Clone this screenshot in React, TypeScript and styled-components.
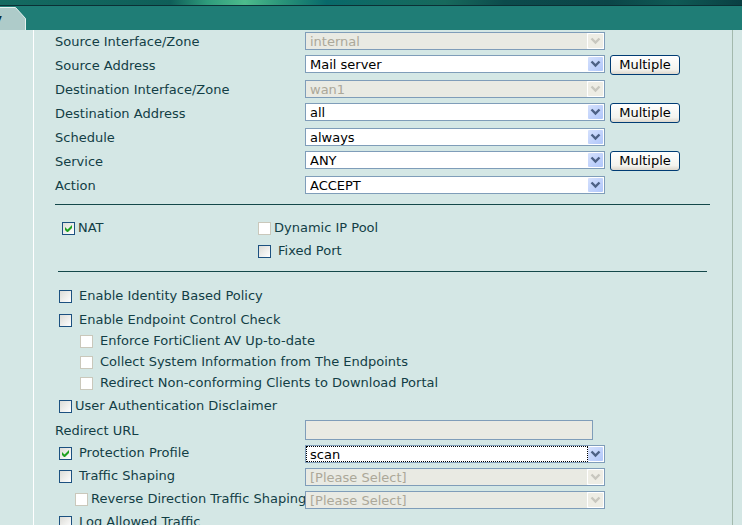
import React from "react";
import styled, { createGlobalStyle, css } from "styled-components";

const GlobalStyle = createGlobalStyle`
  * { box-sizing: border-box; }
  body {
    margin: 0;
    background: #d4e7e5;
    color: #123e45;
    font: 13px/18px Verdana, "DejaVu Sans", sans-serif;
  }
`;

const Page = styled.div`
  display: flex;
  flex-direction: column;
  height: 100vh;
  overflow: hidden;
`;

const Banner = styled.div`
  flex: none;
  height: 6px;
  border-bottom: 1px solid #0b3035;
  background: linear-gradient(
    90deg,
    #146a61 0%,
    #11655d 12%,
    #0f5f59 23%,
    #2f9c7c 28%,
    #4dbb8c 33%,
    #2a9479 38%,
    #08696a 44%,
    #116a62 52%,
    #17695c 60%,
    #0c4b4c 68%,
    #0b4548 82%,
    #0f5a55 91%,
    #0a3f43 100%
  );
`;

const TabBar = styled.nav`
  flex: none;
  display: flex;
  align-items: flex-end;
  height: 24px;
  background: #1f7d76;
`;

const Tab = styled.a`
  position: relative;
  display: flex;
  justify-content: flex-end;
  width: 26px;
  height: 23px;
  padding-right: 24px;
  overflow: hidden;
  color: #082a33;
  font-size: 11px;
  font-weight: bold;
  line-height: 24px;
  text-decoration: none;

  span { position: relative; }
`;

const TabShape = styled.svg`
  position: absolute;
  top: 0;
  left: 0;
`;

const Panel = styled.main`
  flex: 1 0 auto;
  margin: 0 9px 0 33px;
  padding: 0 22px 0 21px;
  border-left: 1px solid #fff;
  border-right: 1px solid #a3b9ad;
`;

const Row = styled.div<{ $top?: number; $height?: number }>`
  display: grid;
  grid-template-columns: 250px minmax(0, 300px) auto;
  align-items: start;
  height: ${(p) => p.$height ?? 24}px;
  padding-top: ${(p) => p.$top ?? 2}px;
`;

const FieldLabel = styled.label<{ $drop?: number }>`
  padding-top: ${(p) => p.$drop ?? 0}px;
  white-space: nowrap;
`;

const SelectFrame = styled.div<{ $focused?: boolean }>`
  position: relative;
  height: 18px;

  ${(p) =>
    p.$focused &&
    css`
      &::after {
        content: "";
        position: absolute;
        inset: 1px 17px 1px 1px;
        border: 1px dotted #000;
        pointer-events: none;
      }
    `}
`;

const SelectBox = styled.select`
  appearance: none;
  display: block;
  width: 100%;
  height: 18px;
  padding: 1px 20px 0 4px;
  border: 1px solid #7f9db9;
  border-radius: 0;
  outline: none;
  background: #fff;
  color: #000;
  font: inherit;
  line-height: 15px;

  &:disabled {
    background: #e9eae3;
    color: #aca899;
    opacity: 1;
  }
`;

const ArrowIcon = styled.svg`
  position: absolute;
  top: 1px;
  right: 1px;
  pointer-events: none;
`;

const MultipleButton = styled.button`
  justify-self: start;
  width: 70px;
  height: 20px;
  margin-left: 5px;
  padding: 0;
  border: 1px solid #003c74;
  border-radius: 3px;
  background: linear-gradient(#fff, #f3f3ee 75%, #dcd7cd);
  color: #000;
  font: inherit;
  line-height: 18px;
`;

const Rule = styled.hr<{ $inset?: number }>`
  height: 1px;
  margin: 0 ${(p) => p.$inset ?? 0}px;
  border: 0;
  background: #14484a;
`;

const NatSection = styled.section`
  display: grid;
  grid-template-columns: 196px 1fr;
  grid-auto-rows: 23px;
  padding: 14px 0 6px 7px;
`;

const Options = styled.section`
  padding-top: 15px;
`;

const CheckLine = styled.label<{ $indent?: number; $gap?: number; $height?: number }>`
  display: flex;
  align-items: flex-start;
  gap: ${(p) => p.$gap ?? 7}px;
  height: ${(p) => p.$height ?? 23}px;
  padding-left: ${(p) => p.$indent ?? 0}px;
  white-space: nowrap;
`;

const CheckBox = styled.input`
  appearance: none;
  flex: none;
  width: 13px;
  height: 13px;
  margin: 3px 0 0;
  border: 1px solid #1c5180;
  background: linear-gradient(135deg, #dcdcd7, #fff);

  &:disabled {
    border-color: #cac8bb;
    background: #fff;
  }
`;

const TickFrame = styled.span`
  position: relative;
  flex: none;
  height: 16px;

  input { display: block; }

  svg {
    position: absolute;
    left: 0;
    bottom: 0;
    display: none;
    pointer-events: none;
  }

  input:checked + svg { display: block; }
`;

const UrlInput = styled.input`
  width: 100%;
  max-width: 288px;
  height: 20px;
  padding: 0 4px;
  border: 1px solid #7f9db9;
  border-radius: 0;
  background: #e9eae3;
  font: inherit;
`;

const OptionRow = styled(Row)`
  height: 23px;
  padding-top: 0;

  ${SelectFrame} { margin-top: 1px; }
`;

function Arrow({ disabled }: { disabled?: boolean }) {
  return (
    <ArrowIcon width="17" height="16" viewBox="0 0 17 16" aria-hidden="true">
      <defs>
        <linearGradient id="arrow-face" x1="0" y1="0" x2="1" y2="1">
          <stop offset="0" stopColor="#d5e1fd" />
          <stop offset="1" stopColor="#b0c6fa" />
        </linearGradient>
      </defs>
      <rect width="17" height="16" fill="#fff" />
      <rect x="1" y="1" width="15" height="14" rx="1" fill={disabled ? "#eeede5" : "url(#arrow-face)"} />
      <path d="M4.500 5.500l4 4 4-4" fill="none" stroke={disabled ? "#c8c7bf" : "#4d6185"} strokeWidth="2.400" />
    </ArrowIcon>
  );
}

interface DropProps {
  id: string;
  label: string;
  value: string;
  disabled?: boolean;
  focused?: boolean;
}

function Drop({ id, label, value, disabled, focused }: DropProps) {
  return (
    <SelectFrame $focused={focused}>
      <SelectBox id={id} aria-label={label} disabled={disabled} defaultValue={value}>
        <option>{value}</option>
      </SelectBox>
      <Arrow disabled={disabled} />
    </SelectFrame>
  );
}

interface CheckProps {
  label: string;
  indent?: number;
  gap?: number;
  height?: number;
  checked?: boolean;
  disabled?: boolean;
}

function Check({ label, indent, gap, height, checked, disabled }: CheckProps) {
  return (
    <CheckLine $indent={indent} $gap={gap} $height={height}>
      <TickFrame>
        <CheckBox type="checkbox" defaultChecked={checked} disabled={disabled} />
        <svg width="13" height="13" viewBox="0 0 13 13" aria-hidden="true">
          <path d="M3 5v3l2 2h1l4-4V3L5.500 7.500z" fill="#21a121" />
        </svg>
      </TickFrame>
      <span>{label}</span>
    </CheckLine>
  );
}

const fields = [
  { id: "src-if", label: "Source Interface/Zone", value: "internal", disabled: true },
  { id: "src-addr", label: "Source Address", value: "Mail server", multiple: true },
  { id: "dst-if", label: "Destination Interface/Zone", value: "wan1", disabled: true },
  { id: "dst-addr", label: "Destination Address", value: "all", multiple: true },
  { id: "schedule", label: "Schedule", value: "always" },
  { id: "service", label: "Service", value: "ANY", multiple: true },
  { id: "action", label: "Action", value: "ACCEPT" },
];

const FieldList = styled.section`
  padding-bottom: 6px;
`;

export default function App() {
  return (
    <Page>
      <GlobalStyle />
      <Banner />
      <TabBar>
        <Tab href="#policy">
          <TabShape width="26" height="23" viewBox="0 0 26 23" aria-hidden="true">
            <path d="M0 .5h15.500l10 11V23H0z" fill="#aecbc9" />
            <path d="M0 .5h15.500l10 11V23" fill="none" stroke="#e6f2f0" />
          </TabShape>
          <span>y</span>
        </Tab>
      </TabBar>
      <Panel>
        <FieldList>
          {fields.map((f) => (
            <Row key={f.id} $top={f.multiple ? 1 : 2}>
              <FieldLabel htmlFor={f.id} $drop={f.multiple ? 2 : 1}>
                {f.label}
              </FieldLabel>
              <Drop id={f.id} label={f.label} value={f.value} disabled={f.disabled} />
              {f.multiple && <MultipleButton type="button">Multiple</MultipleButton>}
            </Row>
          ))}
        </FieldList>
        <Rule />
        <NatSection>
          <Check label="NAT" gap={3} checked />
          <Check label="Dynamic IP Pool" gap={3} disabled />
          <span />
          <Check label="Fixed Port" />
        </NatSection>
        <Rule $inset={3} />
        <Options>
          <Check label="Enable Identity Based Policy" indent={4} height={24} />
          <Check label="Enable Endpoint Control Check" indent={4} height={21} />
          <Check label="Enforce FortiClient AV Up-to-date" indent={25} height={21} disabled />
          <Check label="Collect System Information from The Endpoints" indent={25} height={21} disabled />
          <Check label="Redirect Non-conforming Clients to Download Portal" indent={25} height={23} disabled />
          <Check label="User Authentication Disclaimer" indent={4} gap={3} height={23} />
          <Row $top={0} $height={24}>
            <FieldLabel htmlFor="redirect" $drop={2}>Redirect URL</FieldLabel>
            <UrlInput id="redirect" type="text" disabled />
          </Row>
          <OptionRow>
            <Check label="Protection Profile" indent={4} checked />
            <Drop id="profile" label="Protection Profile" value="scan" focused />
          </OptionRow>
          <OptionRow>
            <Check label="Traffic Shaping" indent={4} />
            <Drop id="shaping" label="Traffic Shaping" value="[Please Select]" disabled />
          </OptionRow>
          <OptionRow>
            <Check label="Reverse Direction Traffic Shaping" indent={20} gap={3} disabled />
            <Drop id="reverse" label="Reverse Direction Traffic Shaping" value="[Please Select]" disabled />
          </OptionRow>
          <Check label="Log Allowed Traffic" indent={4} />
        </Options>
      </Panel>
    </Page>
  );
}
